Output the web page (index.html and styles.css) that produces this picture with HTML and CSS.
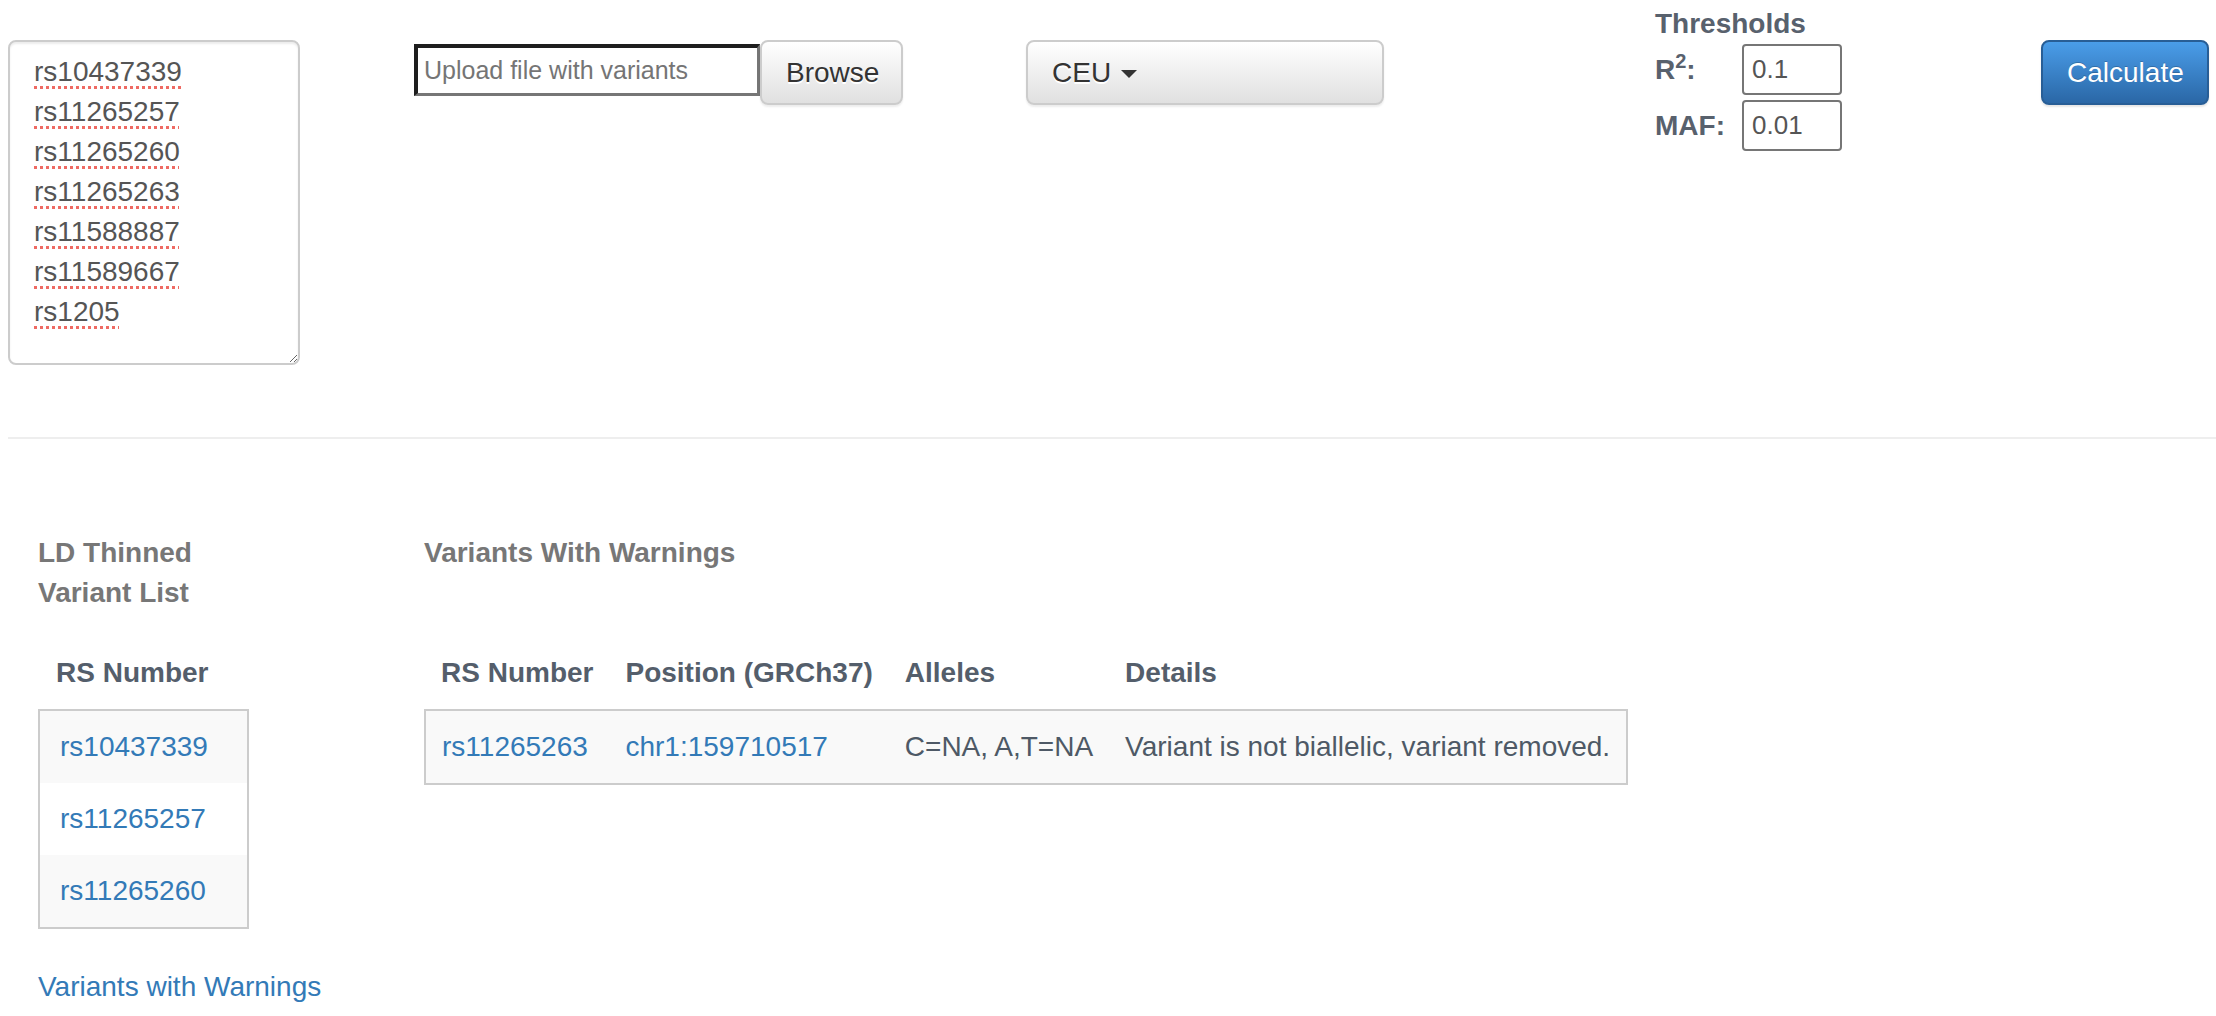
FILE: index.html
```html
<!DOCTYPE html>
<html lang="en">
<head>
<meta charset="utf-8">
<title>SNPclip</title>
<link rel="stylesheet" href="styles.css">
</head>
<body>
<div class="top-row">
  <div class="col col-input">
    <textarea class="snp-list" spellcheck="false">rs10437339
rs11265257
rs11265260
rs11265263
rs11588887
rs11589667
rs1205</textarea>
  </div>
  <div class="col col-file">
    <div class="file-group">
      <input class="file-text" type="text" placeholder="Upload file with variants">
      <button class="btn btn-default btn-browse">Browse</button>
    </div>
  </div>
  <div class="col col-pop">
    <button class="btn btn-default btn-pop">CEU <span class="caret"></span></button>
  </div>
  <div class="col col-thresh">
    <div class="thresh-title">Thresholds</div>
    <div class="thresh-row">
      <label class="thresh-label">R<sup>2</sup>:</label>
      <input class="thresh-input" type="text" value="0.1">
    </div>
    <div class="thresh-row">
      <label class="thresh-label">MAF:</label>
      <input class="thresh-input" type="text" value="0.01">
    </div>
  </div>
  <div class="col col-calc">
    <button class="btn btn-primary">Calculate</button>
  </div>
</div>

<hr class="divider">

<div class="results">
  <div class="ld-col">
    <h4 class="section-title">LD Thinned Variant List</h4>
    <table class="data-table ld-table">
      <thead>
        <tr><th>RS Number</th></tr>
      </thead>
      <tbody>
        <tr class="odd"><td><a href="#">rs10437339</a></td></tr>
        <tr><td><a href="#">rs11265257</a></td></tr>
        <tr class="odd"><td><a href="#">rs11265260</a></td></tr>
      </tbody>
    </table>
    <a class="warn-link" href="#">Variants with Warnings</a>
  </div>
  <div class="warn-col">
    <h4 class="section-title">Variants With Warnings</h4>
    <table class="data-table warn-table">
      <thead>
        <tr><th>RS Number</th><th>Position (GRCh37)</th><th>Alleles</th><th>Details</th></tr>
      </thead>
      <tbody>
        <tr class="odd">
          <td><a href="#">rs11265263</a></td>
          <td><a href="#">chr1:159710517</a></td>
          <td>C=NA, A,T=NA</td>
          <td>Variant is not biallelic, variant removed.</td>
        </tr>
      </tbody>
    </table>
  </div>
</div>
</body>
</html>
```

FILE: styles.css
```css
* { box-sizing: border-box; }

html, body {
  margin: 0;
  padding: 0;
  background: #fff;
}

body {
  font-family: "Liberation Sans", Arial, Helvetica, sans-serif;
  font-size: 28px;
  line-height: 40px;
  color: #333;
  overflow: hidden;
}

/* ---------- top row ---------- */
.top-row {
  display: flex;
  align-items: flex-start;
  padding-left: 8px;
  height: 437px;
}

.col-input { width: 406px; padding-top: 40px; }
.col-file { width: 612px; padding-top: 40px; }
.col-pop { width: 629px; padding-top: 40px; }
.col-thresh { width: 386px; padding-top: 4px; }
.col-calc { padding-top: 40px; }

.snp-list {
  display: block;
  width: 292px;
  height: 325px;
  margin: 0;
  padding: 10px 24px;
  border: 2px solid #ccc;
  border-radius: 8px;
  box-shadow: inset 0 2px 2px rgba(0, 0, 0, .075);
  font-family: "Liberation Sans", Arial, sans-serif;
  font-size: 28px;
  line-height: 40px;
  color: #555;
  text-decoration: underline dotted #ef6a63;
  text-decoration-thickness: 3px;
  text-underline-offset: 5px;
  outline: none;
}

.file-group {
  display: flex;
  align-items: flex-start;
}

.file-text {
  width: 346px;
  height: 52px;
  margin: 4px 0 0 0;
  padding: 0 6px;
  border-style: solid;
  border-width: 4px 3px 3px 4px;
  border-color: #1e1e1e #767676 #767676 #1e1e1e;
  font-family: "Liberation Sans", Arial, sans-serif;
  font-size: 25px;
  color: #333;
  outline: none;
  background: #fff;
}
.file-text::placeholder { color: #757575; }

.btn {
  display: inline-flex;
  align-items: center;
  height: 65px;
  margin: 0;
  padding: 0 24px;
  border: 2px solid transparent;
  border-radius: 8px;
  font-family: "Liberation Sans", Arial, sans-serif;
  font-size: 28px;
  line-height: 40px;
  cursor: pointer;
}

.btn-default {
  color: #333;
  background: linear-gradient(to bottom, #fff 0%, #e0e0e0 100%);
  border-color: #ccc;
  text-shadow: 0 2px 0 #fff;
  box-shadow: inset 0 2px 0 rgba(255, 255, 255, .15), 0 2px 2px rgba(0, 0, 0, .075);
}

.btn-browse { width: 143px; }

.btn-pop {
  width: 358px;
  gap: 10px;
}

.caret {
  display: inline-block;
  width: 0;
  height: 0;
  border-top: 8px solid #333;
  border-left: 8px solid transparent;
  border-right: 8px solid transparent;
  margin-top: 2px;
}

.btn-primary {
  width: 168px;
  color: #fff;
  background: linear-gradient(to bottom, #4a9de9 0%, #2a67a6 100%);
  border-color: #285e96;
  text-shadow: 0 -1px 0 rgba(0, 0, 0, .2);
  box-shadow: 0 2px 2px rgba(0, 0, 0, .1);
}

.thresh-title {
  font-weight: bold;
  color: #58616d;
  line-height: 40px;
}

.thresh-row {
  display: flex;
  align-items: center;
  margin-bottom: 5px;
}

.thresh-label {
  width: 87px;
  font-weight: bold;
  color: #58616d;
}
.thresh-label sup {
  font-size: 20px;
  line-height: 0;
  vertical-align: 0;
  position: relative;
  top: -11px;
}

.thresh-input {
  width: 100px;
  height: 51px;
  padding: 0 8px;
  border: 2px solid #767676;
  border-radius: 4px;
  font-family: "Liberation Sans", Arial, sans-serif;
  font-size: 26px;
  color: #555;
  outline: none;
}

/* ---------- divider ---------- */
.divider {
  margin: 0 0 0 8px;
  border: 0;
  border-top: 2px solid #eee;
  height: 0;
}

/* ---------- results ---------- */
.results {
  display: flex;
  align-items: flex-start;
  padding-left: 38px;
  padding-top: 94px;
}

.ld-col { width: 211px; }
.warn-col { margin-left: 175px; }

.section-title {
  min-height: 80px;
  margin: 0 0 24px 0;
  font-size: 28px;
  line-height: 40px;
  font-weight: bold;
  color: #777;
}

.data-table {
  border-collapse: collapse;
}

.data-table th {
  padding: 16px;
  text-align: left;
  font-weight: bold;
  color: #545e6b;
  white-space: nowrap;
}

.data-table tbody {
  border: 2px solid #ccc;
}

.data-table td {
  padding: 16px;
  white-space: nowrap;
  color: #4e5966;
}

.data-table tr.odd td { background: #f9f9f9; }

.data-table a {
  color: #337ab7;
  text-decoration: none;
}

.ld-table { width: 211px; }
.ld-table th { padding-left: 17px; }
.ld-table td { padding-left: 20px; }

.warn-link {
  display: block;
  margin-top: 38px;
  color: #337ab7;
  text-decoration: none;
  white-space: nowrap;
}
```
